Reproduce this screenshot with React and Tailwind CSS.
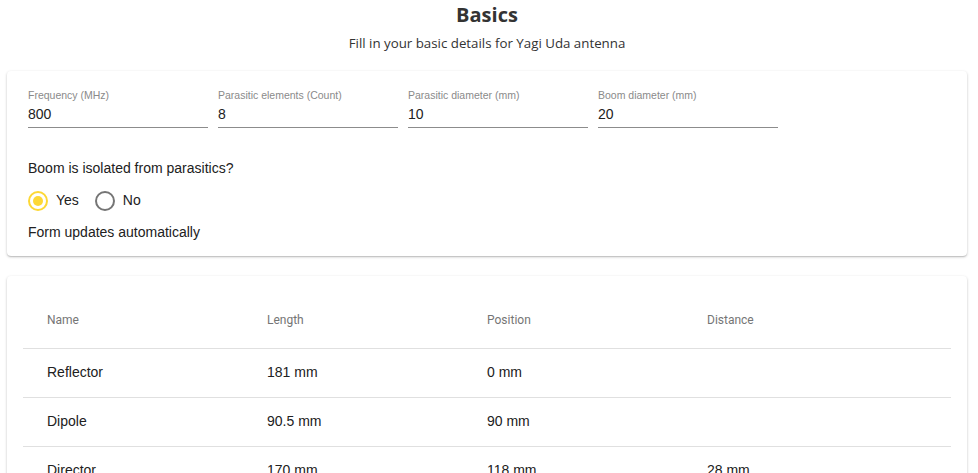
const fields = [
  { label: 'Frequency (MHz)', value: '800' },
  { label: 'Parasitic elements (Count)', value: '8' },
  { label: 'Parasitic diameter (mm)', value: '10' },
  { label: 'Boom diameter (mm)', value: '20' },
];

const rows = [
  { name: 'Reflector', length: '181 mm', position: '0 mm', distance: '' },
  { name: 'Dipole', length: '90.5 mm', position: '90 mm', distance: '' },
  { name: 'Director', length: '170 mm', position: '118 mm', distance: '28 mm' },
];

function Radio({ checked, label }) {
  return (
    <label className="flex items-center gap-[8px]">
      <span
        className={`flex items-center justify-center w-[20px] h-[20px] rounded-full border-2 ${checked ? 'border-[#fdd835]' : 'border-[#757575]'}`}
      >
        {checked && <span className="w-[10px] h-[10px] rounded-full bg-[#fdd835]" />}
      </span>
      <span className="text-[14px] text-[#212121]">{label}</span>
    </label>
  );
}

export default function App() {
  return (
    <div className="min-h-screen bg-white font-['Liberation_Sans',Arial,sans-serif] text-[#212121] overflow-hidden h-[473px]">
      {/* Header */}
      <div className="flex flex-col items-center pt-[3px] pr-[4px]">
        <h1 className="font-['Open_Sans',sans-serif] text-[20px] font-bold leading-[24px] text-[#333]">Basics</h1>
        <p className="mt-[7px] font-['Open_Sans',sans-serif] text-[13.3px] leading-[18px] text-[#333]">
          Fill in your basic details for Yagi Uda antenna
        </p>
      </div>

      {/* Form card */}
      <div className="ml-[7px] mr-[11px] mt-[19px] rounded-[4px] bg-white shadow-[0_1px_3px_rgba(0,0,0,0.2),0_1px_1px_rgba(0,0,0,0.12)] px-[21px] pt-[18px] pb-[15px]">
        <div className="flex gap-[10px]">
          {fields.map((f) => (
            <div key={f.label} className="w-[180px] flex flex-col">
              <span className="text-[10.5px] leading-[12px] text-[#8a8a8a]">{f.label}</span>
              <span className="mt-[4px] text-[14px] leading-[18px] pb-[4px] border-b border-[#8c8c8c]">{f.value}</span>
            </div>
          ))}
        </div>
        <p className="mt-[31px] text-[14px] leading-[18px]">Boom is isolated from parasitics?</p>
        <div className="mt-[13px] flex items-center gap-[16px]">
          <Radio checked label="Yes" />
          <Radio label="No" />
        </div>
        <p className="mt-[12px] text-[14px] leading-[18px]">Form updates automatically</p>
      </div>

      {/* Results card */}
      <div className="ml-[7px] mr-[11px] mt-[20px] rounded-[4px] bg-white shadow-[0_1px_3px_rgba(0,0,0,0.2),0_1px_1px_rgba(0,0,0,0.12)] p-[16px]">
        <table className="w-full border-collapse">
          <thead>
            <tr className="border-b border-[#e0e0e0]">
              {['Name', 'Length', 'Position', 'Distance'].map((h) => (
                <th
                  key={h}
                  className="h-[56px] w-[220px] pl-[24px] text-left font-['Roboto',sans-serif] text-[12px] font-normal text-[#757575]"
                >
                  {h}
                </th>
              ))}
              <th />
            </tr>
          </thead>
          <tbody>
            {rows.map((r) => (
              <tr key={r.name} className="border-b border-[#e0e0e0]">
                <td className="h-[49px] pl-[24px] text-[14px]">{r.name}</td>
                <td className="h-[49px] pl-[24px] text-[14px]">{r.length}</td>
                <td className="h-[49px] pl-[24px] text-[14px]">{r.position}</td>
                <td className="h-[49px] pl-[24px] text-[14px]">{r.distance}</td>
                <td />
              </tr>
            ))}
          </tbody>
        </table>
      </div>
    </div>
  );
}
